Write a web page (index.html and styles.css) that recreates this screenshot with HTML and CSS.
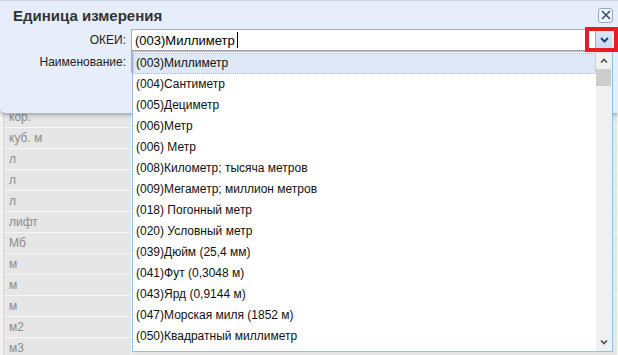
FILE: index.html
```html
<!DOCTYPE html>
<html>
<head>
    <meta charset="UTF-8">
    <title>Единица измерения</title>
    <link rel="stylesheet" href="styles.css">
</head>
<body>
<div class="page">
    <!-- таблица на заднем плане -->
    <div class="grid">
        <div class="row"><div class="cell">кор.</div><div class="cell wide"></div></div>
        <div class="row"><div class="cell">куб. м</div><div class="cell wide"></div></div>
        <div class="row"><div class="cell">л</div><div class="cell wide"></div></div>
        <div class="row"><div class="cell">л</div><div class="cell wide"></div></div>
        <div class="row"><div class="cell">л</div><div class="cell wide"></div></div>
        <div class="row"><div class="cell">лифт</div><div class="cell wide"></div></div>
        <div class="row"><div class="cell">Мб</div><div class="cell wide"></div></div>
        <div class="row"><div class="cell">м</div><div class="cell wide"></div></div>
        <div class="row"><div class="cell">м</div><div class="cell wide"></div></div>
        <div class="row"><div class="cell">м</div><div class="cell wide"></div></div>
        <div class="row"><div class="cell">м2</div><div class="cell wide"></div></div>
        <div class="row"><div class="cell">м3</div><div class="cell wide"></div></div>
    </div>

    <!-- окно -->
    <div class="dialog">
        <div class="dialog-head">
            <span class="dialog-title">Единица измерения</span>
            <span class="close">
                <svg width="10" height="10" viewBox="0 0 10 10"><path d="M1 1L9 9M9 1L1 9" stroke="#2b4a7e" stroke-width="1.5" fill="none"/></svg>
            </span>
        </div>
        <div class="form">
            <label class="field-label">ОКЕИ:</label>
            <div class="combo">
                <div class="combo-input">(003)Миллиметр<span class="caret"></span></div>
                <div class="combo-trigger">
                    <svg width="9" height="6" viewBox="0 0 9 6"><path d="M1 1L4.5 4.5L8 1" stroke="#24457c" stroke-width="2" fill="none"/></svg>
                </div>
            </div>
            <label class="field-label">Наименование:</label>
            <div class="text-input"></div>
        </div>
    </div>

    <!-- выпадающий список -->
    <div class="dropdown">
        <ul class="options">
            <li class="selected">(003)Миллиметр</li>
            <li>(004)Сантиметр</li>
            <li>(005)Дециметр</li>
            <li>(006)Метр</li>
            <li>(006) Метр</li>
            <li>(008)Километр; тысяча метров</li>
            <li>(009)Мегаметр; миллион метров</li>
            <li>(018) Погонный метр</li>
            <li>(020) Условный метр</li>
            <li>(039)Дюйм (25,4 мм)</li>
            <li>(041)Фут (0,3048 м)</li>
            <li>(043)Ярд (0,9144 м)</li>
            <li>(047)Морская миля (1852 м)</li>
            <li>(050)Квадратный миллиметр</li>
        </ul>
        <div class="scroll">
            <div class="scroll-btn">
                <svg width="8" height="5" viewBox="0 0 8 5"><path d="M1 4.5L4 1.5L7 4.5" stroke="#505050" stroke-width="1.6" fill="none"/></svg>
            </div>
            <div class="scroll-thumb"></div>
            <div class="scroll-track"></div>
            <div class="scroll-btn">
                <svg width="8" height="5" viewBox="0 0 8 5"><path d="M1 0.5L4 3.5L7 0.5" stroke="#505050" stroke-width="1.6" fill="none"/></svg>
            </div>
        </div>
    </div>

    <!-- красная рамка-пометка -->
    <div class="mark"></div>
</div>
</body>
</html>
```

FILE: styles.css
```css
html, body, div, ul, li, span, label {
    margin: 0;
    padding: 0;
    list-style: none;
}

body {
    font-family: "Liberation Sans", Arial, sans-serif;
    font-size: 12px;
    color: #000;
    background: #fff;
}

.page {
    position: relative;
    width: 618px;
    height: 355px;
    overflow: hidden;
    background: #f3f3f3;
}

/* таблица */
.grid {
    margin-left: 3px;
    padding-top: 107px;
    border-left: 1px solid #d4d4d4;
}

.row {
    display: flex;
    height: 20px;
    border-bottom: 1px solid #f7f7f7;
    background: #e6e6e6;
}

.cell {
    width: 122px;
    padding-left: 5px;
    line-height: 20px;
    color: #8c8c8c;
    border-right: 1px solid #f7f7f7;
}

.cell.wide {
    flex: 1;
}

/* окно */
.dialog {
    position: absolute;
    top: 0;
    left: 0;
    width: 618px;
    height: 113px;
    background: #e5eefa;
    border-top: 1px solid #cdd5df;
    border-bottom-left-radius: 5px;
    box-shadow: 0 2px 4px rgba(0, 0, 0, 0.3);
    box-sizing: border-box;
}

.dialog-head {
    display: flex;
    justify-content: space-between;
    align-items: center;
    height: 28px;
    padding: 0 5px 0 13px;
}

.dialog-title {
    font-size: 15px;
    font-weight: bold;
    color: #333;
}

.close {
    display: flex;
    align-items: center;
    justify-content: center;
    width: 13px;
    height: 13px;
    border: 1px solid #8fa9cf;
    border-radius: 3px;
    background: #f1f6fd;
}

.form {
    display: grid;
    grid-template-columns: 126px 481px;
    grid-auto-rows: 22px;
    column-gap: 5px;
    align-items: center;
}

.field-label {
    text-align: right;
    color: #222;
}

.combo {
    display: flex;
    height: 22px;
}

.combo-input {
    flex: 1;
    display: flex;
    align-items: center;
    padding-left: 3px;
    font-size: 13px;
    background: #fff;
    border: 1px solid #a9acb8;
}

.caret {
    display: inline-block;
    width: 1px;
    height: 16px;
    margin-left: 2px;
    background: #000;
}

.combo-trigger {
    width: 16px;
    display: flex;
    align-items: center;
    justify-content: center;
    background: linear-gradient(#dce8f8, #c6d9f1);
    border-top: 1px solid #a9acb8;
    border-bottom: 1px solid #a9acb8;
    box-sizing: border-box;
}

.text-input {
    height: 22px;
    background: #fff;
    border: 1px solid #a9acb8;
    box-sizing: border-box;
}

/* выпадающий список */
.dropdown {
    position: absolute;
    left: 132px;
    top: 51px;
    width: 481px;
    height: 301px;
    display: flex;
    background: #fff;
    border: 1px solid #99bbe8;
    box-sizing: border-box;
}

.options {
    flex: 1;
    padding-top: 1px;
    overflow: hidden;
}

.options li {
    height: 21px;
    line-height: 21px;
    padding-left: 3px;
    white-space: nowrap;
    color: #111;
}

.options li.selected {
    height: 21px;
    line-height: 19px;
    padding-left: 2px;
    background: #dfe8f6;
    border: 1px dotted #a3bae9;
    box-sizing: border-box;
}

.scroll {
    width: 16px;
    display: flex;
    flex-direction: column;
    background: #f0f0f0;
}

.scroll-btn {
    height: 17px;
    display: flex;
    align-items: center;
    justify-content: center;
}

.scroll-thumb {
    height: 17px;
    margin: 0 1px 0 0;
    background: #cdcdcd;
}

.scroll-track {
    flex: 1;
}

/* пометка */
.mark {
    position: absolute;
    left: 585px;
    top: 27px;
    width: 33px;
    height: 25px;
    border: 4px solid #e51e25;
    box-sizing: border-box;
}
```
